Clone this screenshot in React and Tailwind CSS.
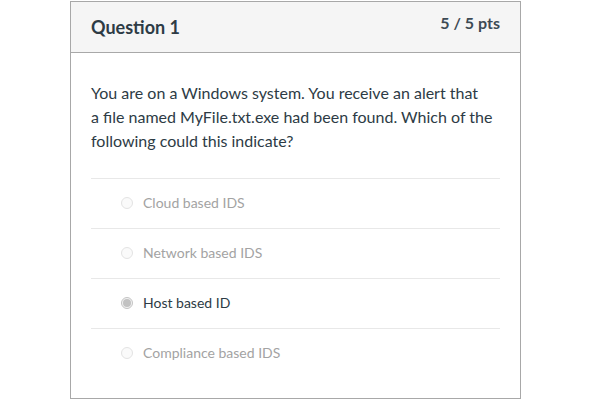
import React from "react";

const answers = [
  { label: "Cloud based IDS", selected: false },
  { label: "Network based IDS", selected: false },
  { label: "Host based ID", selected: true },
  { label: "Compliance based IDS", selected: false },
];

const Radio = ({ selected }) => (
  <span
    className={
      "flex h-[12px] w-[12px] shrink-0 items-center justify-center rounded-full border " +
      (selected ? "border-[#c4c4c4] bg-[#f2f2f2]" : "border-[#e3e3e3] bg-[#fafafa]")
    }
  >
    {selected && <span className="h-[8px] w-[8px] rounded-full bg-[#c2c2c2]" />}
  </span>
);

export default function App() {
  return (
    <div
      className="h-[404px] w-[595px] bg-white pt-px"
      style={{ fontFamily: "Lato, 'Liberation Sans', sans-serif" }}
    >
      <div className="ml-[70px] h-[398px] w-[451px] border border-[#a8a8a8]">
        {/* header */}
        <div className="flex h-[51px] items-start justify-between border-b border-[#a8a8a8] bg-[#f5f5f5] px-[20px]">
          <h2 className="mt-[13px] text-[18px] font-bold leading-[24px] text-[#2d3b45]">
            Question 1
          </h2>
          <span className="mt-[9px] text-[16px] font-bold leading-[24px] text-[#3d4a54]">
            5 / 5 pts
          </span>
        </div>

        {/* body */}
        <div className="px-[20px] pt-[28px]">
          <p className="text-[16px] leading-[24px] text-[#2d3b45]">
            You are on a Windows system. You receive an alert that
            <br />a file named MyFile.txt.exe had been found. Which of the
            following could this indicate?
          </p>
          <div className="mt-[25px]">
            {answers.map((a) => (
              <div
                key={a.label}
                className="flex h-[50px] items-center gap-[10px] border-t border-[#e8e8e8] pb-[2px] pl-[30px]"
              >
                <Radio selected={a.selected} />
                <span
                  className={
                    "text-[14px] leading-[20px] " +
                    (a.selected ? "text-[#2d3b45]" : "text-[#a3a3a3]")
                  }
                >
                  {a.label}
                </span>
              </div>
            ))}
          </div>
        </div>
      </div>
    </div>
  );
}
